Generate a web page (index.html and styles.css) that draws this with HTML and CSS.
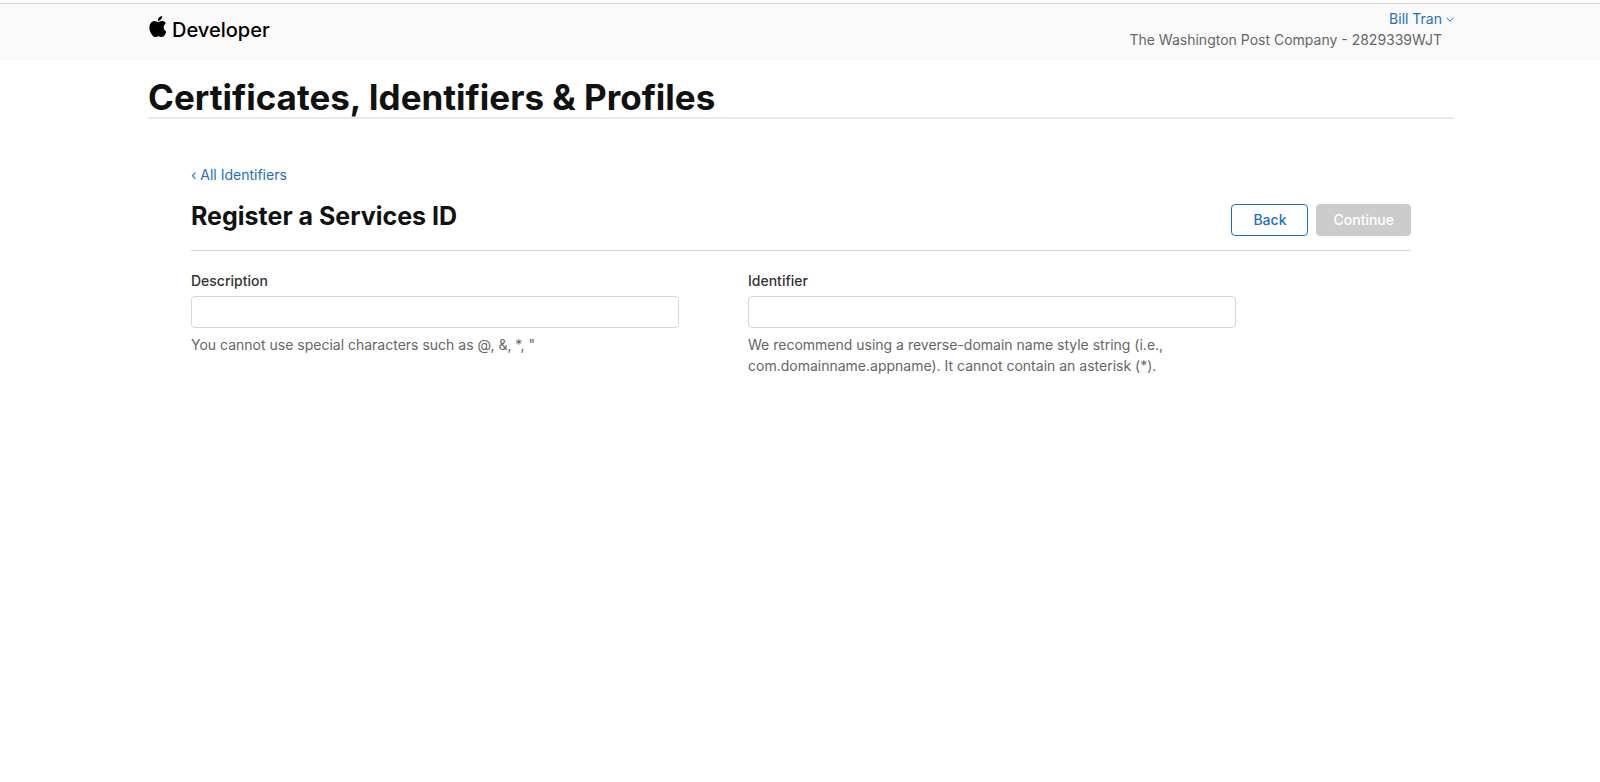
FILE: index.html
```html
<!DOCTYPE html>
<html lang="en">
<head>
    <meta charset="UTF-8">
    <meta name="viewport" content="width=device-width, initial-scale=1.0">
    <title>Certificates, Identifiers &amp; Profiles</title>
    <link rel="stylesheet" href="styles.css">
</head>
<body>

    <header class="topbar">
        <a class="logo" href="#">
            <svg class="logo-icon" viewBox="2 0 19 24" aria-hidden="true">
                <path d="M12.152 6.896c-.948 0-2.415-1.078-3.96-1.04-2.04.027-3.91 1.183-4.961 3.014-2.117 3.675-.546 9.103 1.519 12.09 1.013 1.454 2.208 3.09 3.792 3.039 1.52-.065 2.09-.987 3.935-.987 1.831 0 2.35.987 3.96.948 1.637-.026 2.676-1.48 3.676-2.948 1.156-1.688 1.636-3.325 1.662-3.415-.039-.013-3.182-1.221-3.22-4.857-.026-3.04 2.48-4.494 2.597-4.559-1.429-2.09-3.623-2.324-4.39-2.376-2-.156-3.675 1.09-4.61 1.09zM15.53 3.83c.843-1.012 1.4-2.427 1.245-3.83-1.207.052-2.662.805-3.532 1.818-.78.896-1.454 2.338-1.273 3.714 1.338.104 2.715-.688 3.559-1.701"/>
            </svg>
            <span>Developer</span>
        </a>
        <div class="account">
            <button class="account-name" type="button">
                Bill Tran
                <svg class="chevron" viewBox="0 0 8 5" aria-hidden="true">
                    <path d="M0.5 0.8L4 4.2L7.5 0.8"/>
                </svg>
            </button>
            <div class="account-team">The Washington Post Company - 2829339WJT</div>
        </div>
    </header>

    <main class="page">
        <h1 class="page-title">Certificates, Identifiers &amp; Profiles</h1>

        <div class="content">
            <a class="back-link" href="#">‹ All Identifiers</a>

            <div class="heading">
                <h2>Register a Services ID</h2>
                <div class="actions">
                    <button class="button" type="button">Back</button>
                    <button class="button button-disabled" type="submit" form="register" disabled>Continue</button>
                </div>
            </div>

            <form class="form" id="register">
                <div class="field">
                    <label for="description">Description</label>
                    <input type="text" id="description">
                    <p>You cannot use special characters such as @, &amp;, *, "</p>
                </div>
                <div class="field">
                    <label for="identifier">Identifier</label>
                    <input type="text" id="identifier">
                    <p>We recommend using a reverse-domain name style string (i.e., com.domainname.appname). It cannot contain an asterisk (*).</p>
                </div>
            </form>
        </div>
    </main>

</body>
</html>
```
FILE: styles.css
```css
* {
    box-sizing: border-box;
}
body {
    margin: 0;
    background-color: #fff;
    color: #111;
    font-family: Inter, "Liberation Sans", sans-serif;
    font-size: 14px;
    line-height: 21px;
}
a {
    color: #1a70c4;
    text-decoration: none;
}
button {
    font-family: inherit;
    cursor: pointer;
}

/* top bar */
.topbar {
    display: flex;
    justify-content: space-between;
    align-items: flex-start;
    margin-top: 3px;
    padding: 4px 146px 10px 149px;
    border-top: 1px solid #d6d6d6;
    background-color: #fafafa;
}
.logo {
    display: flex;
    align-items: flex-start;
    gap: 6px;
    padding-top: 8px;
    color: #000;
    font-size: 20px;
    font-weight: 500;
    line-height: 28px;
}
.logo-icon {
    width: 17px;
    height: 21px;
}
.account {
    display: flex;
    flex-direction: column;
    align-items: flex-end;
}
.account-name {
    display: flex;
    align-items: center;
    gap: 4px;
    padding: 0;
    border: 0;
    background: none;
    color: #1a70c4;
    font-size: 14px;
    line-height: 21px;
}
.chevron {
    width: 8px;
    height: 5px;
    margin-top: 2px;
    fill: none;
    stroke: #1a70c4;
    stroke-width: 1;
}
.account-team {
    padding-right: 12px;
    color: #666;
}

/* page */
.page {
    padding: 17px 146px 40px 148px;
}
.page-title {
    margin: 0;
    border-bottom: 2px solid #eaeaea;
    font-size: 35px;
    font-weight: 700;
    line-height: 40px;
}
.content {
    padding: 45px 43px 0;
}
.back-link {
    display: block;
}
.heading {
    display: flex;
    justify-content: space-between;
    align-items: flex-start;
    padding: 16px 0 14px;
    border-bottom: 1px solid #d6d6d6;
}
.heading h2 {
    margin: 0;
    font-size: 25px;
    font-weight: 700;
    line-height: 30px;
}
.actions {
    display: flex;
    gap: 8px;
    padding-top: 3px;
}
.button {
    height: 32px;
    padding: 0 21px 2px;
    border: 1px solid #1a70c4;
    border-radius: 4px;
    background-color: #fff;
    color: #1a70c4;
    font-size: 14px;
    font-weight: 500;
}
.button-disabled {
    padding: 0 16px 2px;
    border-color: #ccc;
    background-color: #ccc;
    color: #fff;
    cursor: default;
}

/* form */
.form {
    display: flex;
    gap: 69px;
    padding-top: 19px;
}
.field {
    width: 40%;
}
.field label {
    display: block;
    color: #333;
    font-weight: 500;
}
.field input {
    display: block;
    width: 100%;
    height: 32px;
    margin: 5px 0 6px;
    padding: 0 10px;
    border: 1px solid #d6d6d6;
    border-radius: 4px;
    background-color: #fff;
    font-family: inherit;
    font-size: 14px;
}
.field p {
    max-width: 430px;
    margin: 0;
    color: #666;
}
```
